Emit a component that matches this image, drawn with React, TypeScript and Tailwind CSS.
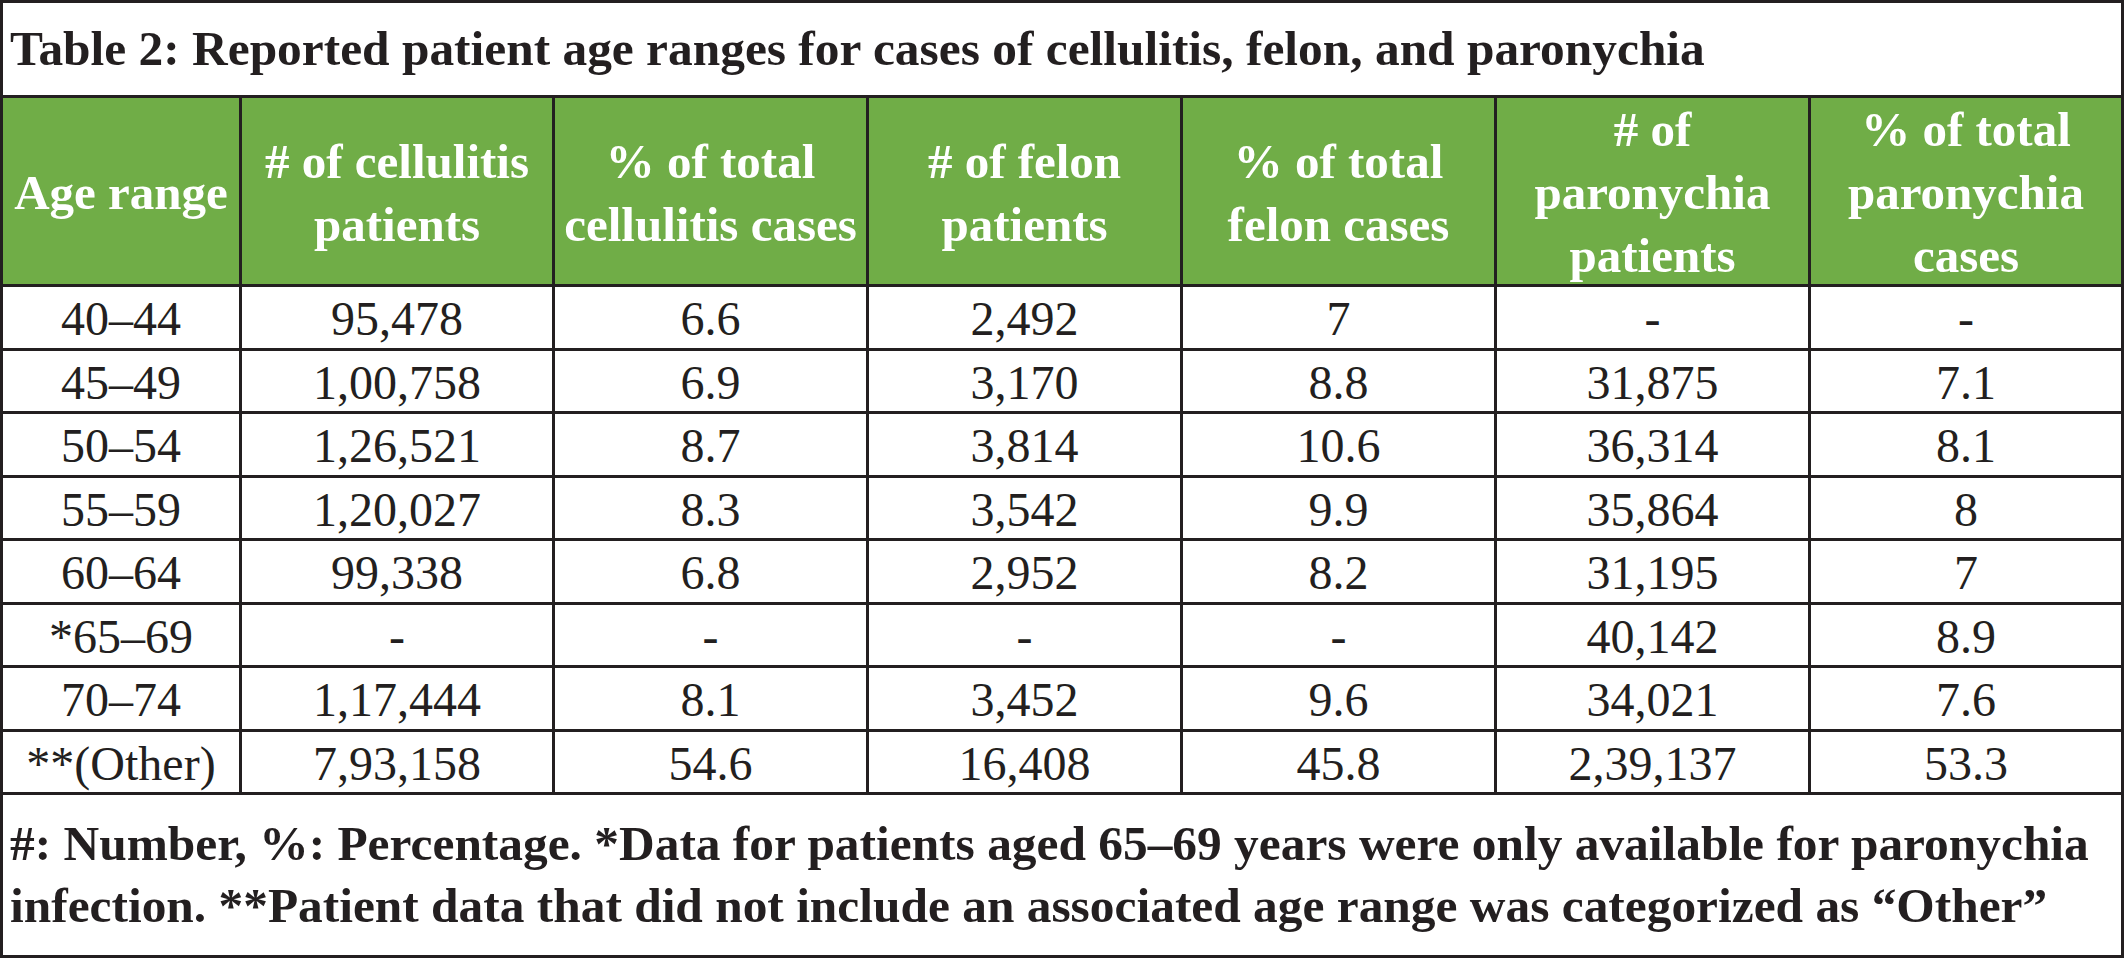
const HEAD = [
  ["Age range"],
  ["# of cellulitis", "patients"],
  ["% of total", "cellulitis cases"],
  ["# of felon", "patients"],
  ["% of total", "felon cases"],
  ["# of", "paronychia", "patients"],
  ["% of total", "paronychia", "cases"],
];

const ROWS = [
  ["40–44", "95,478", "6.6", "2,492", "7", "-", "-"],
  ["45–49", "1,00,758", "6.9", "3,170", "8.8", "31,875", "7.1"],
  ["50–54", "1,26,521", "8.7", "3,814", "10.6", "36,314", "8.1"],
  ["55–59", "1,20,027", "8.3", "3,542", "9.9", "35,864", "8"],
  ["60–64", "99,338", "6.8", "2,952", "8.2", "31,195", "7"],
  ["*65–69", "-", "-", "-", "-", "40,142", "8.9"],
  ["70–74", "1,17,444", "8.1", "3,452", "9.6", "34,021", "7.6"],
  ["**(Other)", "7,93,158", "54.6", "16,408", "45.8", "2,39,137", "53.3"],
];

const COLS = "grid grid-cols-[239px_313px_314px_314px_314px_314px_310px]";

export default function App() {
  return (
    <div className="w-[2124px] h-[958px] bg-white text-[#231f20] [font-family:'Liberation_Serif',serif]">
      <div className="w-full h-full flex flex-col border-[3px] border-[#231f20]">
        {/* caption */}
        <div className="h-[95px] shrink-0 border-b-[3px] border-[#231f20] flex items-center pl-[7px] text-[49.4px] font-bold leading-[92px] whitespace-nowrap">
          Table 2: Reported patient age ranges for cases of cellulitis, felon, and paronychia
        </div>

        {/* header */}
        <div className={`${COLS} h-[189px] shrink-0 border-b-[3px] border-[#231f20] bg-[#70ad47]`}>
          {HEAD.map((lines, i) => (
            <div
              key={i}
              className={`flex flex-col items-center justify-center pb-[8px] text-white text-[49px] font-bold leading-[63px] text-center whitespace-nowrap ${i < HEAD.length - 1 ? "border-r-[3px] border-[#231f20]" : ""}`}
            >
              {lines.map((l) => <span key={l}>{l}</span>)}
            </div>
          ))}
        </div>

        {/* body */}
        {ROWS.map((r, ri) => (
          <div key={ri} className={`${COLS} h-[63.5px] shrink-0 border-b-[3px] border-[#231f20]`}>
            {r.map((c, ci) => (
              <div
                key={ci}
                className={`flex items-center justify-center pt-[4px] text-[48px] leading-[56px] whitespace-nowrap ${ci < r.length - 1 ? "border-r-[3px] border-[#231f20]" : ""}`}
              >
                {c}
              </div>
            ))}
          </div>
        ))}

        {/* footnote */}
        <div className="flex-1 flex items-center pl-[7px] text-[49.4px] font-bold leading-[62px] whitespace-nowrap">
          <p>
            #: Number, %: Percentage. *Data for patients aged 65–69 years were only available for paronychia
            <br />
            infection. **Patient data that did not include an associated age range was categorized as “Other”
          </p>
        </div>
      </div>
    </div>
  );
}
